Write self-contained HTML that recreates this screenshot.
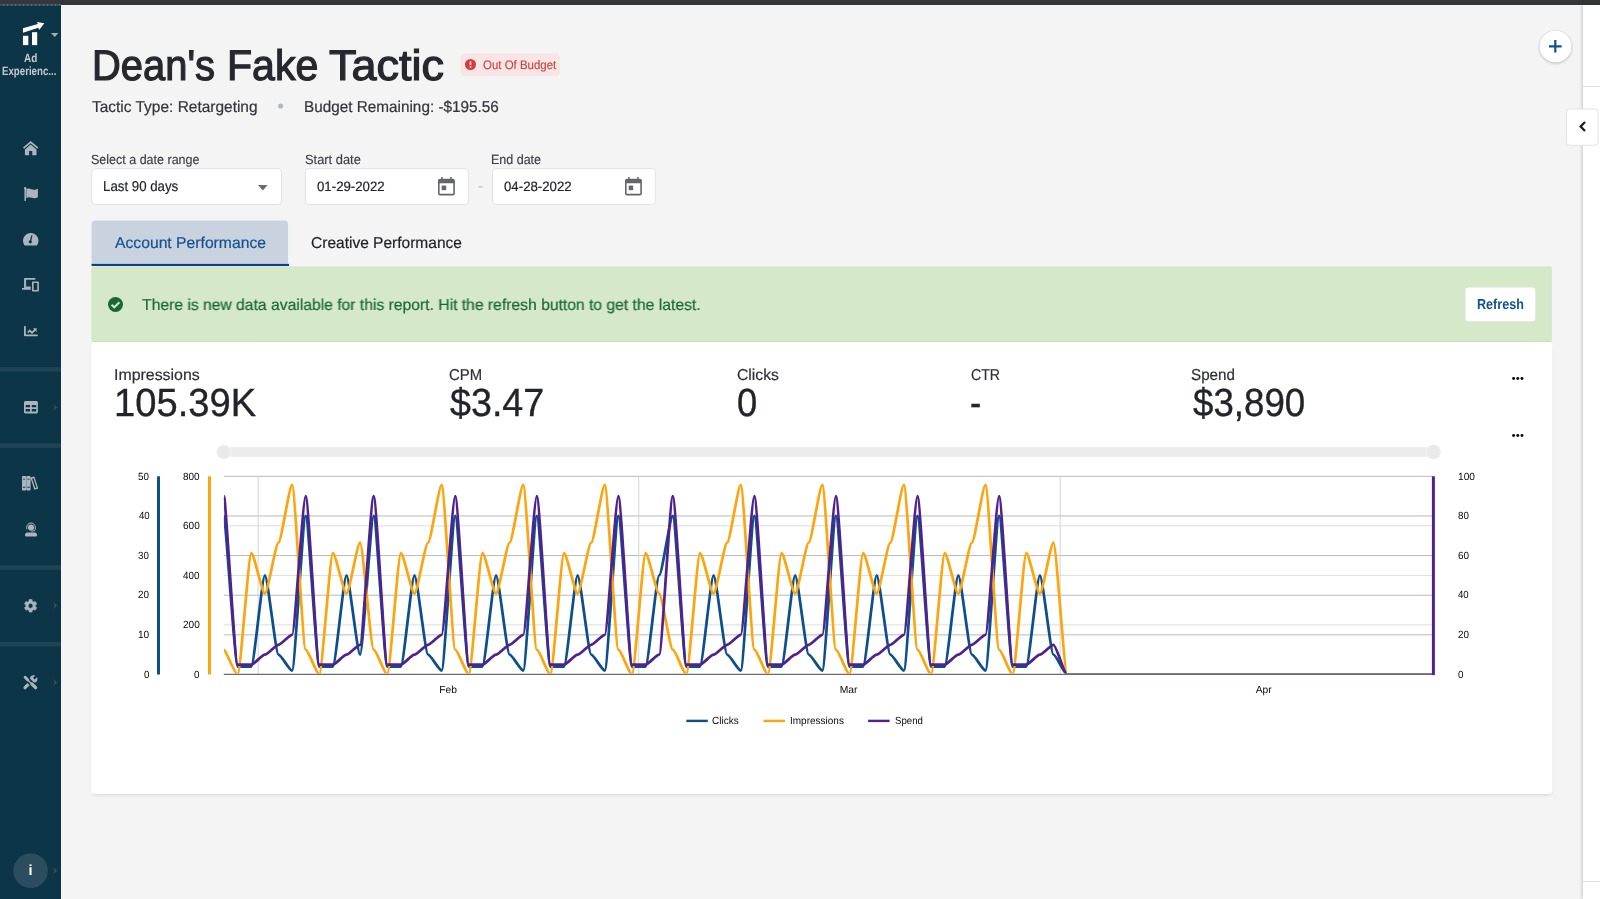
<!DOCTYPE html>
<html lang="en">
<head>
<meta charset="utf-8">
<title>Dean's Fake Tactic</title>
<style>
html,body{margin:0;padding:0;}
body{width:1600px;height:899px;overflow:hidden;position:relative;background:#f4f4f4;font-family:"Liberation Sans", Arial, sans-serif;}
.t{position:absolute;white-space:nowrap;transform-origin:0 0;display:block;text-rendering:geometricPrecision;}
.abs{position:absolute;}
#topbar{left:0;top:0;width:1600px;height:5px;background:#35363a;}
#sidebar{left:0;top:5px;width:61px;height:894px;background:#0c3547;}
.sdiv{position:absolute;left:0;width:61px;height:4px;background:#1f4555;}
#rightpanel{left:1583px;top:5px;width:17px;height:894px;background:#fff;box-shadow:-1px 0 3px rgba(0,0,0,0.18);}
.rline{position:absolute;left:0;width:17px;height:1px;background:#e3e3e6;}
.box{position:absolute;background:#fff;border:1px solid #e2e2e2;border-radius:4px;box-sizing:border-box;}
svg{position:absolute;overflow:visible;}
</style>
</head>
<body>
<div id="root" class="abs" style="left:0;top:0;width:1600px;height:899px;will-change:transform;">
<div id="topbar" class="abs"></div>
<nav aria-label="Main navigation">
<div id="sidebar" class="abs"></div>
<div class="abs" style="left:0px;top:4px;width:61px;height:1px;background:repeating-linear-gradient(90deg,#3f5b69 0,#3f5b69 2.700px,#6f7c86 2.700px,#6f7c86 4px);transform-origin:0 0;transform:translate(0.00px,0.20px) scale(1.0000,1.4000);"></div>
<div class="abs" style="left:0px;top:367px;width:61px;height:4px;background:#1f4555;transform-origin:0 0;transform:translate(0.00px,0.20px) scale(1.0000,1.1000);"></div>
<div class="abs" style="left:0px;top:443px;width:61px;height:4px;background:#1f4555;transform-origin:0 0;transform:translate(0.00px,0.50px) scale(1.0000,1.1000);"></div>
<div class="abs" style="left:0px;top:565px;width:61px;height:4px;background:#1f4555;transform-origin:0 0;transform:translate(0.00px,0.40px) scale(1.0000,1.1000);"></div>
<div class="abs" style="left:0px;top:642px;width:61px;height:4px;background:#1f4555;transform-origin:0 0;transform:translate(0.00px,0.00px) scale(1.0000,1.1000);"></div>
<svg style="left:0px;top:0px" width="61" height="60" viewBox="0 0 61 60" fill="#fff"><rect x="22.95" y="35.8" width="5.35" height="9.3"/><rect x="32.0" y="32.2" width="5.2" height="12.9"/><path d="M22.95 28.3 L37.9 23.9 L36.9 21.9 L44.3 23.3 L39.2 29.9 L38.4 27.8 L22.95 32.7 Z"/></svg>
<svg style="left:50.8px;top:32.7px" width="7.4" height="4" viewBox="0 0 7.4 4" fill="#9fb0ba"><path d="M0 0h7.4L3.7 4z"/></svg>
<span class="t" style="left:23.83px;top:51px;font-size:12px;line-height:14px;color:#c6cbd1;font-weight:700;transform:scaleX(0.8297);">Ad</span><span class="t" style="left:2.45px;top:64px;font-size:12px;line-height:14px;color:#c6cbd1;font-weight:700;transform:scaleX(0.8066);">Experienc...</span>
<svg style="left:23.00px;top:140.90px" width="15.4" height="14.2" viewBox="0 0 15.4 14.2" fill="#abb5bf"><path d="M7.7 0 L15.4 6.500 L14.3 7.800 L7.7 2.200 L1.100 7.800 L0 6.500 Z"/><path d="M7.7 3.500 L13.500 8.400 V13.600 Q13.500 14.200 12.900 14.200 H9.300 V10 H6.100 V14.200 H2.500 Q1.900 14.200 1.900 13.600 V8.400 Z"/></svg>
<svg style="left:24.10px;top:186.90px" width="14" height="13.9" viewBox="0 0 14 13.9" fill="#abb5bf"><circle cx="1.2" cy="1.2" r="1.2"/><rect x="0.45" y="1.2" width="1.500" height="12.7" rx="0.5"/><path d="M2.300 2.100 C4.200 1.100 5.800 1.600 7.400 2.300 C9.200 3 11 2.900 13.200 1.900 Q13.900 1.600 13.900 2.300 V9.900 Q13.900 10.300 13.500 10.500 C11.400 11.500 9.600 11.500 7.800 10.800 C6 10.100 4.400 9.900 2.300 10.900 Z"/></svg>
<svg style="left:23.00px;top:233.30px" width="15.5" height="12.4" viewBox="0 0 15.5 12.4" fill="#abb5bf"><path fill-rule="evenodd" d="M7.75 0 A7.75 7.75 0 0 1 15.500 7.75 C15.500 9.200 15.100 10.600 14.400 11.800 C14.200 12.200 13.900 12.400 13.500 12.400 H2 C1.600 12.400 1.300 12.200 1.100 11.800 C0.400 10.600 0 9.200 0 7.75 A7.75 7.75 0 0 1 7.75 0 Z M9.600 2.600 L8.300 7.500 A1.600 1.600 0 1 1 7 7.200 L8.300 2.300 Z"/></svg>
<svg style="left:22.30px;top:278.20px" width="16.9" height="13.6" viewBox="0 0 16.9 13.6" fill="#abb5bf"><path fill-rule="evenodd" d="M2.800 0 H13.300 V1.700 H4.100 V8.600 H8.700 V11.800 H0.800 C0.300 11.800 0 11.400 0 11 V10.100 H2.100 V0.700 C2.100 0.300 2.400 0 2.800 0 Z M10.800 3.400 H16.100 C16.600 3.400 16.900 3.800 16.900 4.200 V12.800 C16.900 13.300 16.600 13.600 16.100 13.600 H10.800 C10.300 13.600 10 13.300 10 12.800 V4.200 C10 3.800 10.300 3.400 10.800 3.400 Z M11.600 5.100 V11.900 H15.300 V5.100 Z"/></svg>
<svg style="left:23.70px;top:325.80px" width="13.8" height="10.2" viewBox="0 0 13.8 10.2" fill="#abb5bf"><path d="M0 0.600 Q0 0 0.600 0 H1.200 Q1.800 0 1.800 0.600 V8.400 H13.200 Q13.800 8.400 13.800 9 V9.600 Q13.800 10.200 13.200 10.200 H0.600 Q0 10.200 0 9.600 Z"/><path d="M3.200 5.900 L5.800 3.300 L8 5.500 L10.100 3.400 L9 2.300 H12.600 V5.900 L11.400 4.700 L8 8 L5.800 5.800 L4.400 7.200 Z"/></svg>
<svg style="left:23.70px;top:400.80px" width="13.9" height="12.4" viewBox="0 0 13.9 12.4" fill="#abb5bf"><path fill-rule="evenodd" d="M1.500 0 H12.400 C13.200 0 13.900 0.700 13.900 1.500 V10.900 C13.900 11.700 13.200 12.400 12.400 12.400 H1.500 C0.700 12.400 0 11.700 0 10.900 V1.500 C0 0.700 0.700 0 1.500 0 Z M1.700 3.900 V6.300 H6.100 V3.900 Z M7.800 3.900 V6.300 H12.200 V3.900 Z M1.700 8 V10.600 H6.100 V8 Z M7.800 8 V10.600 H12.200 V8 Z"/></svg>
<svg style="left:22.40px;top:476.40px" width="16.2" height="14.4" viewBox="0 0 16.2 14.4" fill="#abb5bf"><path fill-rule="evenodd" d="M0.900 0 H3.300 Q4.200 0 4.200 0.900 V13.500 Q4.200 14.400 3.300 14.400 H0.900 Q0 14.400 0 13.500 V0.900 Q0 0 0.900 0 Z M0.900 2.700 V3.600 H3.300 V2.700 Z M0.900 10.800 V11.700 H3.300 V10.800 Z M5.300 0 H7.700 Q8.600 0 8.600 0.900 V13.500 Q8.600 14.400 7.700 14.400 H5.300 Q4.400 14.400 4.400 13.500 V0.900 Q4.400 0 5.300 0 Z M5.300 2.700 V3.600 H7.700 V2.700 Z M5.300 10.800 V11.700 H7.700 V10.800 Z M9 1.400 L11.700 0.600 Q12.300 0.500 12.500 1 L16.100 12 Q16.300 12.600 15.700 12.800 L13 13.600 Q12.400 13.800 12.200 13.200 L8.600 2.200 Q8.400 1.600 9 1.400 Z M10.100 2.700 L13.300 12 L14.700 11.500 L11.500 2.300 Z"/></svg>
<svg style="left:24.70px;top:521.80px" width="12" height="14.4" viewBox="0 0 12 14.4" fill="#abb5bf"><circle cx="6" cy="5.500" r="3.100"/><path fill="none" stroke="#abb5bf" stroke-width="1" d="M1.700 7.200 V5.300 A4.300 4.300 0 0 1 10.300 5.300 V7 Q10.300 9.200 7.600 9.200 H6.200"/><path d="M2.300 10.400 H9.700 C11 10.400 12 11.400 12 12.700 V13.600 Q12 14.400 11.200 14.400 H0.800 Q0 14.400 0 13.600 V12.700 C0 11.400 1 10.400 2.300 10.400 Z"/></svg>
<svg style="left:23.90px;top:598.80px" width="13.2" height="13.6" viewBox="0 0 13.2 13.6" fill="#abb5bf"><path fill-rule="evenodd" stroke="#abb5bf" stroke-width="0.500" stroke-linejoin="round" d="M5.13 0.52 L8.07 0.52 L8.45 2.42 L9.46 3.01 L11.30 2.39 L12.77 4.93 L11.31 6.21 L11.31 7.39 L12.77 8.67 L11.30 11.21 L9.46 10.59 L8.45 11.18 L8.07 13.08 L5.13 13.08 L4.75 11.18 L3.74 10.59 L1.90 11.21 L0.43 8.67 L1.89 7.39 L1.89 6.21 L0.43 4.93 L1.90 2.39 L3.74 3.01 L4.75 2.42 Z M6.60 4.45 A2.35 2.35 0 1 0 6.61 4.45 Z"/></svg>
<svg style="left:23.40px;top:674.60px" width="14.7" height="14.7" viewBox="0 0 14.7 14.7" fill="#abb5bf"><g stroke-linecap="round" fill="none"><path d="M2 12.700 L9.300 5.400" stroke="#abb5bf" stroke-width="3.200"/><circle cx="10.700" cy="3.900" r="3.700" fill="#abb5bf" stroke="none"/><path d="M10.900 3.700 L14.900 -0.300" stroke="#0c3547" stroke-width="2.500" stroke-linecap="butt"/><path d="M2.300 2.500 L12.500 12.600" stroke="#0c3547" stroke-width="5"/><path d="M2.100 2.300 L4.800 5" stroke="#abb5bf" stroke-width="2.800"/><path d="M4.800 5 L8 8.200" stroke="#abb5bf" stroke-width="1.500"/><path d="M9 9.100 L12.600 12.700" stroke="#abb5bf" stroke-width="3.300"/></g></svg>
<svg style="left:52.8px;top:403.70px" width="4" height="7" viewBox="0 0 4 7" fill="#37535f"><path d="M0.300 0L4 3.500L0.300 7L1.600 3.500z"/></svg>
<svg style="left:52.8px;top:602.10px" width="4" height="7" viewBox="0 0 4 7" fill="#37535f"><path d="M0.300 0L4 3.500L0.300 7L1.600 3.500z"/></svg>
<svg style="left:52.8px;top:678.70px" width="4" height="7" viewBox="0 0 4 7" fill="#37535f"><path d="M0.300 0L4 3.500L0.300 7L1.600 3.500z"/></svg>
<svg style="left:52.8px;top:867.10px" width="4" height="7" viewBox="0 0 4 7" fill="#37535f"><path d="M0.300 0L4 3.500L0.300 7L1.600 3.500z"/></svg>
<div class="abs" style="left:13px;top:853px;width:35px;height:35px;border-radius:50%;background:#2b4d5d;transform-origin:0 0;transform:translate(0.30px,0.50px) scale(0.9886,0.9886);"></div>
<span class="t" style="left:28.55px;top:863px;font-size:14.5px;line-height:16px;color:#ffffff;font-weight:700;">i</span>
</nav>
<header>
<div id="rightpanel" class="abs"><div class="rline" style="top:81px"></div><div class="rline" style="top:876px"></div></div>
<div class="abs" style="left:1539px;top:30px;width:32px;height:32px;border-radius:50%;background:#fff;box-shadow:0 1px 3px rgba(0,0,0,0.22),0 0 1px rgba(0,0,0,0.2);transform-origin:0 0;transform:translate(0.50px,0.50px);"></div>
<svg style="left:1549.2px;top:40.2px" width="12.6" height="12.6" viewBox="0 0 12.6 12.6" fill="#10508e"><path d="M5.200 0h2.200v5.200h5.200v2.200H7.400v5.200H5.200V7.400H0V5.200h5.200z"/></svg>
<div class="abs" style="left:1566px;top:108px;width:33px;height:37px;border-radius:4px;background:#fff;border:1px solid #e4e4e6;box-sizing:border-box;transform-origin:0 0;transform:translate(0.00px,0.60px) scale(0.9879,1.0027);"></div>
<svg style="left:1578.5px;top:121px" width="7" height="11" viewBox="0 0 7 11" fill="none" stroke="#16161c" stroke-width="2.2"><path d="M6 1 L1.6 5.500 L6 10"/></svg>
<h1 style="margin:0;font-weight:normal;font-size:16px"><span class="t" style="left:91.98px;top:42px;font-size:42.8px;line-height:48px;color:#27272f;transform:scaleX(0.9323);-webkit-text-stroke:1.2px #27272f;">Dean's</span> <span class="t" style="left:227.49px;top:42px;font-size:42.8px;line-height:48px;color:#27272f;transform:scaleX(0.9603);-webkit-text-stroke:1.2px #27272f;">Fake</span> <span class="t" style="left:329.20px;top:42px;font-size:42.8px;line-height:48px;color:#27272f;transform:scaleX(1.0517);-webkit-text-stroke:1.2px #27272f;">Tactic</span></h1>
<div class="abs" style="left:460px;top:53px;width:99px;height:23px;border-radius:4px;background:#f9e5e6;transform-origin:0 0;transform:translate(0.70px,0.30px) scale(1.0020,0.9913);"></div>
<svg style="left:464.5px;top:59.2px" width="11" height="11" viewBox="0 0 11 11"><circle cx="5.5" cy="5.5" r="5.500" fill="#d8393c"/><rect x="4.7" y="2.3" width="1.6" height="4" rx="0.4" fill="#fae3e4"/><circle cx="5.5" cy="8" r="0.95" fill="#fae3e4"/></svg>
<span class="t" style="left:482.61px;top:58px;font-size:12.3px;line-height:14px;color:#c8453b;transform:scaleX(0.9326);-webkit-text-stroke:0.15px #c8453b;">Out Of Budget</span><span class="t" style="left:92.21px;top:99px;font-size:15.8px;line-height:17px;color:#33333b;transform:scaleX(0.9786);-webkit-text-stroke:0.2px #33333b;">Tactic Type: Retargeting</span><div class="abs" style="left:278px;top:103px;width:5px;height:5px;border-radius:50%;background:#b3b7c3;transform-origin:0 0;transform:translate(0.10px,0.40px);"></div>
<span class="t" style="left:303.54px;top:99px;font-size:15.8px;line-height:17px;color:#33333b;transform:scaleX(0.9686);-webkit-text-stroke:0.2px #33333b;">Budget Remaining: -$195.56</span><span class="t" style="left:91.31px;top:152px;font-size:13.3px;line-height:15px;color:#3a3b44;transform:scaleX(0.9405);-webkit-text-stroke:0.15px #3a3b44;">Select a date range</span><span class="t" style="left:304.89px;top:152px;font-size:13.3px;line-height:15px;color:#3a3b44;transform:scaleX(0.9678);-webkit-text-stroke:0.15px #3a3b44;">Start date</span><span class="t" style="left:491.23px;top:152px;font-size:13.3px;line-height:15px;color:#3a3b44;transform:scaleX(0.9401);-webkit-text-stroke:0.15px #3a3b44;">End date</span><div class="box" style="left:91px;top:168px;width:191px;height:37px;transform-origin:0 0;transform:translate(0.25px,0.10px) scale(0.9987,0.9973);"></div>
<div class="box" style="left:305px;top:168px;width:164px;height:37px;transform-origin:0 0;transform:translate(0.00px,0.10px) scale(0.9994,0.9973);"></div>
<div class="box" style="left:492px;top:168px;width:164px;height:37px;transform-origin:0 0;transform:translate(0.00px,0.10px) scale(0.9988,0.9973);"></div>
<span class="t" style="left:103.48px;top:179px;font-size:14.3px;line-height:16px;color:#1f2027;transform:scaleX(0.9279);-webkit-text-stroke:0.2px #1f2027;">Last 90 days</span><span class="t" style="left:317.41px;top:179px;font-size:13.6px;line-height:15px;color:#1f2027;transform:scaleX(0.9736);-webkit-text-stroke:0.2px #1f2027;">01-29-2022</span><span class="t" style="left:504.11px;top:179px;font-size:13.6px;line-height:15px;color:#1f2027;transform:scaleX(0.9736);-webkit-text-stroke:0.2px #1f2027;">04-28-2022</span><svg style="left:257.6px;top:184.8px" width="9.6" height="5.4" viewBox="0 0 9.6 5.4" fill="#6a6a70"><path d="M0 0h9.6L4.8 5.4z"/></svg>
<svg style="left:437.8px;top:176.6px" width="16.9" height="18.4" viewBox="0 0 16.9 18.4" fill="#64656b"><path fill-rule="evenodd" d="M3.200 0 H4.700 V1.700 H12.200 V0 H13.700 V1.700 H14.900 C16 1.700 16.900 2.600 16.900 3.700 V16.400 C16.900 17.500 16 18.400 14.900 18.400 H2 C0.900 18.400 0 17.500 0 16.400 V3.700 C0 2.600 0.900 1.700 2 1.700 H3.200 Z M1.600 6.300 V16.800 H15.300 V6.300 Z"/><rect x="3.700" y="8.600" width="4.500" height="4.600"/></svg>
<svg style="left:624.7px;top:176.6px" width="16.9" height="18.4" viewBox="0 0 16.9 18.4" fill="#64656b"><path fill-rule="evenodd" d="M3.200 0 H4.700 V1.700 H12.200 V0 H13.700 V1.700 H14.900 C16 1.700 16.900 2.600 16.900 3.700 V16.400 C16.900 17.500 16 18.400 14.900 18.400 H2 C0.900 18.400 0 17.500 0 16.400 V3.700 C0 2.600 0.900 1.700 2 1.700 H3.200 Z M1.600 6.300 V16.800 H15.300 V6.300 Z"/><rect x="3.700" y="8.600" width="4.500" height="4.600"/></svg>
<div class="abs" style="left:478px;top:186px;width:4px;height:1px;background:#b9bbc6;transform-origin:0 0;transform:translate(0.40px,0.30px) scale(1.0500,1.2000);"></div>
<div class="abs" style="left:91px;top:220px;width:197px;height:44px;background:#c9d3e0;border-radius:4px 4px 0 0;transform-origin:0 0;transform:translate(0.50px,0.40px) scale(0.9980,1.0023);"></div>
<div class="abs" style="left:91px;top:263px;width:198px;height:2px;background:#0d3f89;transform-origin:0 0;transform:translate(0.50px,0.90px) scale(0.9975,1.0500);"></div>
<span class="t" style="left:115.20px;top:235px;font-size:15.8px;line-height:17px;color:#15508f;transform:scaleX(0.9938);-webkit-text-stroke:0.2px #15508f;">Account Performance</span><span class="t" style="left:311.41px;top:235px;font-size:15.8px;line-height:17px;color:#1f2027;transform:scaleX(0.9824);-webkit-text-stroke:0.2px #1f2027;">Creative Performance</span></header>
<main>
<div class="abs" style="left:91px;top:342px;width:1461px;height:452px;background:#fff;border-radius:4px;box-shadow:0 2px 3px -1px rgba(0,0,0,0.085),0 4px 5px -3px rgba(0,0,0,0.06);transform-origin:0 0;transform:translate(0.40px,0.00px);"></div>
<div class="abs" style="left:91px;top:266px;width:1460px;height:75px;background:#d5e9c8;border-radius:2px;border-bottom:1px solid #c9e0ba;box-sizing:border-box;box-shadow:0 -0.500px 0 rgba(0,0,0,0.05);transform-origin:0 0;transform:translate(0.50px,0.60px) scale(1.0003,1.0053);"></div>
<svg style="left:108px;top:297.2px" width="15" height="15" viewBox="0 0 15 15"><circle cx="7.5" cy="7.5" r="7.5" fill="#196834"/><path d="M3.6 7.700 L6.300 10.300 L11.400 5.200" fill="none" stroke="#d5e9c8" stroke-width="2"/></svg>
<span class="t" style="left:142.30px;top:297px;font-size:15.8px;line-height:17px;color:#196834;transform:scaleX(0.9924);-webkit-text-stroke:0.2px #196834;">There is new data available for this report. Hit the refresh button to get the latest.</span><div class="abs" style="left:1465px;top:287px;width:70px;height:34px;background:#fff;border-radius:3px;transform-origin:0 0;transform:translate(0.50px,0.50px) scale(0.9971,0.9912);"></div>
<span class="t" style="left:1477.11px;top:297px;font-size:14.4px;line-height:16px;color:#14508f;font-weight:700;transform:scaleX(0.8744);">Refresh</span><span class="t" style="left:113.79px;top:367px;font-size:15.8px;line-height:17px;color:#2e2f38;transform:scaleX(1.0063);-webkit-text-stroke:0.2px #2e2f38;">Impressions</span><span class="t" style="left:114.39px;top:381px;font-size:39.3px;line-height:44px;color:#22232b;transform:scaleX(0.9708);-webkit-text-stroke:0.35px #22232b;">105.39K</span><span class="t" style="left:448.65px;top:367px;font-size:15.8px;line-height:17px;color:#2e2f38;transform:scaleX(0.9410);-webkit-text-stroke:0.2px #2e2f38;">CPM</span><span class="t" style="left:450.48px;top:381px;font-size:39.3px;line-height:44px;color:#22232b;transform:scaleX(0.9586);-webkit-text-stroke:0.35px #22232b;">$3.47</span><span class="t" style="left:736.70px;top:367px;font-size:15.8px;line-height:17px;color:#2e2f38;transform:scaleX(0.9968);-webkit-text-stroke:0.2px #2e2f38;">Clicks</span><span class="t" style="left:737.44px;top:381px;font-size:39.3px;line-height:44px;color:#22232b;transform:scaleX(0.9237);-webkit-text-stroke:0.35px #22232b;">0</span><span class="t" style="left:970.68px;top:367px;font-size:15.8px;line-height:17px;color:#2e2f38;transform:scaleX(0.8947);-webkit-text-stroke:0.2px #2e2f38;">CTR</span><span class="t" style="left:970.42px;top:381px;font-size:39.3px;line-height:44px;color:#22232b;transform:scaleX(0.8574);-webkit-text-stroke:0.35px #22232b;">-</span><span class="t" style="left:1191.23px;top:367px;font-size:15.8px;line-height:17px;color:#2e2f38;transform:scaleX(0.9614);-webkit-text-stroke:0.2px #2e2f38;">Spend</span><span class="t" style="left:1193.47px;top:381px;font-size:39.3px;line-height:44px;color:#22232b;transform:scaleX(0.9340);-webkit-text-stroke:0.35px #22232b;">$3,890</span><svg style="left:1512.1px;top:376.9px" width="11.6" height="3.2" viewBox="0 0 11.6 3.2" fill="#0c0c0c"><circle cx="1.600" cy="1.600" r="1.500"/><circle cx="5.800" cy="1.600" r="1.500"/><circle cx="10" cy="1.600" r="1.500"/></svg>
<svg style="left:1512.1px;top:433.9px" width="11.6" height="3.2" viewBox="0 0 11.6 3.2" fill="#0c0c0c"><circle cx="1.600" cy="1.600" r="1.500"/><circle cx="5.800" cy="1.600" r="1.500"/><circle cx="10" cy="1.600" r="1.500"/></svg>
<svg style="left:0;top:0" width="1600" height="899" viewBox="0 0 1600 899">
<defs><clipPath id="plotclip"><rect x="223.8" y="456.3" width="1209.8" height="217.3"/></clipPath></defs>
<rect x="223.8" y="447.2" width="1209.8" height="9.600" fill="#ececec"/>
<circle cx="223.8" cy="452" r="7.3" fill="#e9e9e9" stroke="#f8f8f8" stroke-width="0.8"/><circle cx="1433.6" cy="452" r="7.3" fill="#e9e9e9" stroke="#f8f8f8" stroke-width="0.8"/>
<line x1="223.8" x2="1433.6" y1="634.86" y2="634.86" stroke="#b9b9b9" stroke-width="1"/>
<line x1="223.8" x2="1433.6" y1="595.22" y2="595.22" stroke="#b9b9b9" stroke-width="1"/>
<line x1="223.8" x2="1433.6" y1="555.58" y2="555.58" stroke="#b9b9b9" stroke-width="1"/>
<line x1="223.8" x2="1433.6" y1="515.94" y2="515.94" stroke="#b9b9b9" stroke-width="1"/>
<line x1="223.8" x2="1433.6" y1="476.30" y2="476.30" stroke="#b9b9b9" stroke-width="1"/>
<line x1="223.8" x2="1433.6" y1="624.95" y2="624.95" stroke="#dcdcdc" stroke-width="1"/>
<line x1="223.8" x2="1433.6" y1="575.40" y2="575.40" stroke="#dcdcdc" stroke-width="1"/>
<line x1="223.8" x2="1433.6" y1="525.85" y2="525.85" stroke="#dcdcdc" stroke-width="1"/>
<line x1="258.13" x2="258.13" y1="476.3" y2="674.5" stroke="#d4d4d4" stroke-width="1"/>
<line x1="638.74" x2="638.74" y1="476.3" y2="674.5" stroke="#d4d4d4" stroke-width="1"/>
<line x1="1060.14" x2="1060.14" y1="476.3" y2="674.5" stroke="#d4d4d4" stroke-width="1"/>
<line x1="158.5" x2="158.5" y1="476.3" y2="674.5" stroke="#0d4f8b" stroke-width="3"/>
<line x1="209.5" x2="209.5" y1="476.3" y2="674.5" stroke="#fda50f" stroke-width="3"/>
<g clip-path="url(#plotclip)">
<path d="M224.10 515.94 C225.46 515.94 234.98 666.57 237.70 666.57 C240.42 666.57 248.57 666.57 251.29 666.57 C254.01 666.57 262.17 575.40 264.89 575.40 C267.61 575.40 275.77 654.68 278.49 654.68 C281.20 654.68 289.36 670.54 292.08 670.54 C294.80 670.53 302.96 515.94 305.68 515.94 C308.40 515.94 316.55 666.57 319.27 666.57 C321.99 666.57 330.15 666.57 332.87 666.57 C335.59 666.57 343.75 575.40 346.47 575.40 C349.19 575.40 357.34 654.68 360.06 654.68 C362.78 654.68 370.94 515.94 373.66 515.94 C376.38 515.94 384.54 666.57 387.26 666.57 C389.97 666.57 398.13 666.57 400.85 666.57 C403.57 666.57 411.73 575.40 414.45 575.40 C417.17 575.40 425.32 654.68 428.04 654.68 C430.76 654.68 438.92 670.54 441.64 670.54 C444.36 670.53 452.52 515.94 455.24 515.94 C457.96 515.94 466.11 666.57 468.83 666.57 C471.55 666.57 479.71 666.57 482.43 666.57 C485.15 666.57 493.31 575.40 496.03 575.40 C498.74 575.40 506.90 654.68 509.62 654.68 C512.34 654.68 520.50 670.54 523.22 670.54 C525.94 670.53 534.09 515.94 536.81 515.94 C539.53 515.94 547.69 666.57 550.41 666.57 C553.13 666.57 561.29 666.57 564.01 666.57 C566.73 666.57 574.88 575.40 577.60 575.40 C580.32 575.40 588.48 654.68 591.20 654.68 C593.92 654.68 602.08 670.54 604.80 670.54 C607.51 670.53 615.67 515.94 618.39 515.94 C621.11 515.94 629.27 666.57 631.99 666.57 C634.71 666.57 642.86 666.57 645.58 666.57 C648.30 666.57 656.46 575.40 659.18 575.40 C661.90 575.40 670.06 515.94 672.78 515.94 C675.50 515.94 683.65 666.57 686.37 666.57 C689.09 666.57 697.25 666.57 699.97 666.57 C702.69 666.57 710.85 575.40 713.57 575.40 C716.28 575.40 724.44 654.68 727.16 654.68 C729.88 654.68 738.04 670.54 740.76 670.54 C743.48 670.53 751.63 515.94 754.35 515.94 C757.07 515.94 765.23 666.57 767.95 666.57 C770.67 666.57 778.83 666.57 781.55 666.57 C784.27 666.57 792.42 575.40 795.14 575.40 C797.86 575.40 806.02 654.68 808.74 654.68 C811.46 654.68 819.62 670.54 822.34 670.54 C825.05 670.53 833.21 515.94 835.93 515.94 C838.65 515.94 846.81 666.57 849.53 666.57 C852.25 666.57 860.40 666.57 863.12 666.57 C865.84 666.57 874.00 575.40 876.72 575.40 C879.44 575.40 887.60 654.68 890.32 654.68 C893.04 654.68 901.19 670.54 903.91 670.54 C906.63 670.53 914.79 515.94 917.51 515.94 C920.23 515.94 928.39 666.57 931.11 666.57 C933.82 666.57 941.98 666.57 944.70 666.57 C947.42 666.57 955.58 575.40 958.30 575.40 C961.02 575.40 969.17 654.68 971.89 654.68 C974.61 654.68 982.77 670.54 985.49 670.54 C988.21 670.53 996.37 515.94 999.09 515.94 C1001.81 515.94 1009.96 666.57 1012.68 666.57 C1015.40 666.57 1023.56 666.57 1026.28 666.57 C1029.00 666.57 1037.16 575.40 1039.88 575.40 C1042.60 575.40 1050.75 654.68 1053.47 654.68 C1056.19 654.68 1064.35 674.50 1067.07 674.50 C1069.79 674.50 1077.94 674.50 1080.66 674.50 C1083.38 674.50 1091.54 674.50 1094.26 674.50 C1096.98 674.50 1105.14 674.50 1107.86 674.50 C1110.58 674.50 1118.73 674.50 1121.45 674.50 C1124.17 674.50 1132.33 674.50 1135.05 674.50 C1137.77 674.50 1145.93 674.50 1148.65 674.50 C1151.37 674.50 1159.52 674.50 1162.24 674.50 C1164.96 674.50 1173.12 674.50 1175.84 674.50 C1178.56 674.50 1186.71 674.50 1189.43 674.50 C1192.15 674.50 1200.31 674.50 1203.03 674.50 C1205.75 674.50 1213.91 674.50 1216.63 674.50 C1219.35 674.50 1227.50 674.50 1230.22 674.50 C1232.94 674.50 1241.10 674.50 1243.82 674.50 C1246.54 674.50 1254.70 674.50 1257.42 674.50 C1260.14 674.50 1268.29 674.50 1271.01 674.50 C1273.73 674.50 1281.89 674.50 1284.61 674.50 C1287.33 674.50 1295.48 674.50 1298.20 674.50 C1300.92 674.50 1309.08 674.50 1311.80 674.50 C1314.52 674.50 1322.68 674.50 1325.40 674.50 C1328.12 674.50 1336.27 674.50 1338.99 674.50 C1341.71 674.50 1349.87 674.50 1352.59 674.50 C1355.31 674.50 1363.47 674.50 1366.19 674.50 C1368.91 674.50 1377.06 674.50 1379.78 674.50 C1382.50 674.50 1390.66 674.50 1393.38 674.50 C1396.10 674.50 1404.25 674.50 1406.97 674.50 C1409.69 674.50 1417.85 674.50 1420.57 674.50 C1423.29 674.50 1432.81 674.50 1434.17 674.50" fill="none" stroke="#0d4f8b" stroke-width="2.75" stroke-linejoin="round"/>
<path d="M224.10 649.73 C225.46 649.73 234.98 674.50 237.70 674.50 C240.42 674.50 248.57 553.10 251.29 553.10 C254.01 553.10 262.17 593.73 264.89 593.73 C267.61 593.73 275.77 542.70 278.49 542.70 C281.20 542.70 289.36 484.97 292.08 484.97 C294.80 484.97 302.96 649.72 305.68 649.73 C308.40 649.73 316.55 674.50 319.27 674.50 C321.99 674.50 330.15 553.10 332.87 553.10 C335.59 553.10 343.75 593.73 346.47 593.73 C349.19 593.73 357.34 542.70 360.06 542.70 C362.78 542.70 370.94 649.72 373.66 649.73 C376.38 649.73 384.54 674.50 387.26 674.50 C389.97 674.50 398.13 553.10 400.85 553.10 C403.57 553.10 411.73 593.73 414.45 593.73 C417.17 593.73 425.32 542.70 428.04 542.70 C430.76 542.70 438.92 484.97 441.64 484.97 C444.36 484.97 452.52 649.72 455.24 649.73 C457.96 649.73 466.11 674.50 468.83 674.50 C471.55 674.50 479.71 553.10 482.43 553.10 C485.15 553.10 493.31 593.73 496.03 593.73 C498.74 593.73 506.90 542.70 509.62 542.70 C512.34 542.70 520.50 484.97 523.22 484.97 C525.94 484.97 534.09 649.72 536.81 649.73 C539.53 649.73 547.69 674.50 550.41 674.50 C553.13 674.50 561.29 553.10 564.01 553.10 C566.73 553.10 574.88 593.73 577.60 593.73 C580.32 593.73 588.48 542.70 591.20 542.70 C593.92 542.70 602.08 484.97 604.80 484.97 C607.51 484.97 615.67 649.72 618.39 649.73 C621.11 649.73 629.27 674.50 631.99 674.50 C634.71 674.50 642.86 553.10 645.58 553.10 C648.30 553.10 656.46 593.73 659.18 593.73 C661.90 593.73 670.06 649.72 672.78 649.73 C675.50 649.73 683.65 674.50 686.37 674.50 C689.09 674.50 697.25 553.10 699.97 553.10 C702.69 553.10 710.85 593.73 713.57 593.73 C716.28 593.73 724.44 542.70 727.16 542.70 C729.88 542.70 738.04 484.97 740.76 484.97 C743.48 484.97 751.63 649.72 754.35 649.73 C757.07 649.73 765.23 674.50 767.95 674.50 C770.67 674.50 778.83 553.10 781.55 553.10 C784.27 553.10 792.42 593.73 795.14 593.73 C797.86 593.73 806.02 542.70 808.74 542.70 C811.46 542.70 819.62 484.97 822.34 484.97 C825.05 484.97 833.21 649.72 835.93 649.73 C838.65 649.73 846.81 674.50 849.53 674.50 C852.25 674.50 860.40 553.10 863.12 553.10 C865.84 553.10 874.00 593.73 876.72 593.73 C879.44 593.73 887.60 542.70 890.32 542.70 C893.04 542.70 901.19 484.97 903.91 484.97 C906.63 484.97 914.79 649.72 917.51 649.73 C920.23 649.73 928.39 674.50 931.11 674.50 C933.82 674.50 941.98 553.10 944.70 553.10 C947.42 553.10 955.58 593.73 958.30 593.73 C961.02 593.73 969.17 542.70 971.89 542.70 C974.61 542.70 982.77 484.97 985.49 484.97 C988.21 484.97 996.37 649.72 999.09 649.73 C1001.81 649.73 1009.96 674.50 1012.68 674.50 C1015.40 674.50 1023.56 553.10 1026.28 553.10 C1029.00 553.10 1037.16 593.73 1039.88 593.73 C1042.60 593.73 1050.75 542.70 1053.47 542.70 C1056.19 542.70 1064.35 674.50 1067.07 674.50 C1069.79 674.50 1077.94 674.50 1080.66 674.50 C1083.38 674.50 1091.54 674.50 1094.26 674.50 C1096.98 674.50 1105.14 674.50 1107.86 674.50 C1110.58 674.50 1118.73 674.50 1121.45 674.50 C1124.17 674.50 1132.33 674.50 1135.05 674.50 C1137.77 674.50 1145.93 674.50 1148.65 674.50 C1151.37 674.50 1159.52 674.50 1162.24 674.50 C1164.96 674.50 1173.12 674.50 1175.84 674.50 C1178.56 674.50 1186.71 674.50 1189.43 674.50 C1192.15 674.50 1200.31 674.50 1203.03 674.50 C1205.75 674.50 1213.91 674.50 1216.63 674.50 C1219.35 674.50 1227.50 674.50 1230.22 674.50 C1232.94 674.50 1241.10 674.50 1243.82 674.50 C1246.54 674.50 1254.70 674.50 1257.42 674.50 C1260.14 674.50 1268.29 674.50 1271.01 674.50 C1273.73 674.50 1281.89 674.50 1284.61 674.50 C1287.33 674.50 1295.48 674.50 1298.20 674.50 C1300.92 674.50 1309.08 674.50 1311.80 674.50 C1314.52 674.50 1322.68 674.50 1325.40 674.50 C1328.12 674.50 1336.27 674.50 1338.99 674.50 C1341.71 674.50 1349.87 674.50 1352.59 674.50 C1355.31 674.50 1363.47 674.50 1366.19 674.50 C1368.91 674.50 1377.06 674.50 1379.78 674.50 C1382.50 674.50 1390.66 674.50 1393.38 674.50 C1396.10 674.50 1404.25 674.50 1406.97 674.50 C1409.69 674.50 1417.85 674.50 1420.57 674.50 C1423.29 674.50 1432.81 674.50 1434.17 674.50" fill="none" stroke="#fda50f" stroke-width="2.75" stroke-linejoin="round"/>
<path d="M224.10 496.12 C225.46 496.12 234.98 664.59 237.70 664.59 C240.42 664.59 248.57 664.59 251.29 664.59 C254.01 664.59 262.17 654.68 264.89 654.68 C267.61 654.68 275.77 644.77 278.49 644.77 C281.20 644.77 289.36 634.86 292.08 634.86 C294.80 634.86 302.96 496.12 305.68 496.12 C308.40 496.12 316.55 664.59 319.27 664.59 C321.99 664.59 330.15 664.59 332.87 664.59 C335.59 664.59 343.75 654.68 346.47 654.68 C349.19 654.68 357.34 644.77 360.06 644.77 C362.78 644.77 370.94 496.12 373.66 496.12 C376.38 496.12 384.54 664.59 387.26 664.59 C389.97 664.59 398.13 664.59 400.85 664.59 C403.57 664.59 411.73 654.68 414.45 654.68 C417.17 654.68 425.32 644.77 428.04 644.77 C430.76 644.77 438.92 634.86 441.64 634.86 C444.36 634.86 452.52 496.12 455.24 496.12 C457.96 496.12 466.11 664.59 468.83 664.59 C471.55 664.59 479.71 664.59 482.43 664.59 C485.15 664.59 493.31 654.68 496.03 654.68 C498.74 654.68 506.90 644.77 509.62 644.77 C512.34 644.77 520.50 634.86 523.22 634.86 C525.94 634.86 534.09 496.12 536.81 496.12 C539.53 496.12 547.69 664.59 550.41 664.59 C553.13 664.59 561.29 664.59 564.01 664.59 C566.73 664.59 574.88 654.68 577.60 654.68 C580.32 654.68 588.48 644.77 591.20 644.77 C593.92 644.77 602.08 634.86 604.80 634.86 C607.51 634.86 615.67 496.12 618.39 496.12 C621.11 496.12 629.27 664.59 631.99 664.59 C634.71 664.59 642.86 664.59 645.58 664.59 C648.30 664.59 656.46 654.68 659.18 654.68 C661.90 654.68 670.06 496.12 672.78 496.12 C675.50 496.12 683.65 664.59 686.37 664.59 C689.09 664.59 697.25 664.59 699.97 664.59 C702.69 664.59 710.85 654.68 713.57 654.68 C716.28 654.68 724.44 644.77 727.16 644.77 C729.88 644.77 738.04 634.86 740.76 634.86 C743.48 634.86 751.63 496.12 754.35 496.12 C757.07 496.12 765.23 664.59 767.95 664.59 C770.67 664.59 778.83 664.59 781.55 664.59 C784.27 664.59 792.42 654.68 795.14 654.68 C797.86 654.68 806.02 644.77 808.74 644.77 C811.46 644.77 819.62 634.86 822.34 634.86 C825.05 634.86 833.21 496.12 835.93 496.12 C838.65 496.12 846.81 664.59 849.53 664.59 C852.25 664.59 860.40 664.59 863.12 664.59 C865.84 664.59 874.00 654.68 876.72 654.68 C879.44 654.68 887.60 644.77 890.32 644.77 C893.04 644.77 901.19 634.86 903.91 634.86 C906.63 634.86 914.79 496.12 917.51 496.12 C920.23 496.12 928.39 664.59 931.11 664.59 C933.82 664.59 941.98 664.59 944.70 664.59 C947.42 664.59 955.58 654.68 958.30 654.68 C961.02 654.68 969.17 644.77 971.89 644.77 C974.61 644.77 982.77 634.86 985.49 634.86 C988.21 634.86 996.37 496.12 999.09 496.12 C1001.81 496.12 1009.96 664.59 1012.68 664.59 C1015.40 664.59 1023.56 664.59 1026.28 664.59 C1029.00 664.59 1037.16 654.68 1039.88 654.68 C1042.60 654.68 1050.75 644.77 1053.47 644.77 C1056.19 644.77 1064.35 674.50 1067.07 674.50 C1069.79 674.50 1077.94 674.50 1080.66 674.50 C1083.38 674.50 1091.54 674.50 1094.26 674.50 C1096.98 674.50 1105.14 674.50 1107.86 674.50 C1110.58 674.50 1118.73 674.50 1121.45 674.50 C1124.17 674.50 1132.33 674.50 1135.05 674.50 C1137.77 674.50 1145.93 674.50 1148.65 674.50 C1151.37 674.50 1159.52 674.50 1162.24 674.50 C1164.96 674.50 1173.12 674.50 1175.84 674.50 C1178.56 674.50 1186.71 674.50 1189.43 674.50 C1192.15 674.50 1200.31 674.50 1203.03 674.50 C1205.75 674.50 1213.91 674.50 1216.63 674.50 C1219.35 674.50 1227.50 674.50 1230.22 674.50 C1232.94 674.50 1241.10 674.50 1243.82 674.50 C1246.54 674.50 1254.70 674.50 1257.42 674.50 C1260.14 674.50 1268.29 674.50 1271.01 674.50 C1273.73 674.50 1281.89 674.50 1284.61 674.50 C1287.33 674.50 1295.48 674.50 1298.20 674.50 C1300.92 674.50 1309.08 674.50 1311.80 674.50 C1314.52 674.50 1322.68 674.50 1325.40 674.50 C1328.12 674.50 1336.27 674.50 1338.99 674.50 C1341.71 674.50 1349.87 674.50 1352.59 674.50 C1355.31 674.50 1363.47 674.50 1366.19 674.50 C1368.91 674.50 1377.06 674.50 1379.78 674.50 C1382.50 674.50 1390.66 674.50 1393.38 674.50 C1396.10 674.50 1404.25 674.50 1406.97 674.50 C1409.69 674.50 1417.85 674.50 1420.57 674.50 C1423.29 674.50 1432.81 674.50 1434.17 674.50" fill="none" stroke="#50228f" stroke-width="2.75" stroke-linejoin="round"/>
</g>
<line x1="223.8" x2="1433.6" y1="674.40" y2="674.40" stroke="#6c6c6c" stroke-width="1.1"/>
<line x1="1433.4" x2="1433.4" y1="476.3" y2="675.1" stroke="#50228f" stroke-width="3"/>
</svg>
<span class="t" style="left:143.82px;top:670px;font-size:10.4px;line-height:11px;color:#0a0a0a;transform:scaleX(0.9400);">0</span><span class="t" style="left:138.02px;top:630px;font-size:10.4px;line-height:11px;color:#0a0a0a;transform:scaleX(0.9729);">10</span><span class="t" style="left:138.22px;top:590px;font-size:10.4px;line-height:11px;color:#0a0a0a;transform:scaleX(0.9547);">20</span><span class="t" style="left:138.42px;top:551px;font-size:10.4px;line-height:11px;color:#0a0a0a;transform:scaleX(0.9372);">30</span><span class="t" style="left:138.51px;top:511px;font-size:10.4px;line-height:11px;color:#0a0a0a;transform:scaleX(0.9286);">40</span><span class="t" style="left:138.32px;top:472px;font-size:10.4px;line-height:11px;color:#0a0a0a;transform:scaleX(0.9458);">50</span><span class="t" style="left:194.22px;top:670px;font-size:10.4px;line-height:11px;color:#0a0a0a;transform:scaleX(0.9400);">0</span><span class="t" style="left:182.92px;top:620px;font-size:10.4px;line-height:11px;color:#0a0a0a;transform:scaleX(0.9655);">200</span><span class="t" style="left:183.21px;top:571px;font-size:10.4px;line-height:11px;color:#0a0a0a;transform:scaleX(0.9482);">400</span><span class="t" style="left:182.92px;top:521px;font-size:10.4px;line-height:11px;color:#0a0a0a;transform:scaleX(0.9655);">600</span><span class="t" style="left:183.02px;top:472px;font-size:10.4px;line-height:11px;color:#0a0a0a;transform:scaleX(0.9597);">800</span><span class="t" style="left:1457.92px;top:670px;font-size:10.4px;line-height:11px;color:#0a0a0a;transform:scaleX(0.9400);">0</span><span class="t" style="left:1457.82px;top:630px;font-size:10.4px;line-height:11px;color:#0a0a0a;transform:scaleX(0.9547);">20</span><span class="t" style="left:1458.11px;top:590px;font-size:10.4px;line-height:11px;color:#0a0a0a;transform:scaleX(0.9286);">40</span><span class="t" style="left:1457.82px;top:551px;font-size:10.4px;line-height:11px;color:#0a0a0a;transform:scaleX(0.9547);">60</span><span class="t" style="left:1457.92px;top:511px;font-size:10.4px;line-height:11px;color:#0a0a0a;transform:scaleX(0.9458);">80</span><span class="t" style="left:1457.62px;top:472px;font-size:10.4px;line-height:11px;color:#0a0a0a;transform:scaleX(0.9774);">100</span><span class="t" style="left:439.14px;top:685px;font-size:10.3px;line-height:11px;color:#0a0a0a;">Feb</span><span class="t" style="left:839.80px;top:685px;font-size:10.3px;line-height:11px;color:#0a0a0a;">Mar</span><span class="t" style="left:1255.75px;top:685px;font-size:10.3px;line-height:11px;color:#0a0a0a;">Apr</span><div class="abs" style="left:686px;top:719px;width:22px;height:2px;background:#0d4f8b;transform-origin:0 0;transform:translate(0.30px,0.70px) scale(0.9773,1.2000);"></div>
<span class="t" style="left:712.42px;top:716px;font-size:10.3px;line-height:11px;color:#0a0a0a;transform:scaleX(0.9694);">Clicks</span><div class="abs" style="left:763px;top:719px;width:22px;height:2px;background:#fda50f;transform-origin:0 0;transform:translate(0.50px,0.70px) scale(0.9773,1.2000);"></div>
<span class="t" style="left:789.83px;top:716px;font-size:10.3px;line-height:11px;color:#0a0a0a;transform:scaleX(0.9710);">Impressions</span><div class="abs" style="left:868px;top:719px;width:22px;height:2px;background:#50228f;transform-origin:0 0;transform:translate(0.10px,0.70px) scale(0.9773,1.2000);"></div>
<span class="t" style="left:894.73px;top:716px;font-size:10.3px;line-height:11px;color:#0a0a0a;transform:scaleX(0.9355);">Spend</span></main>
</div>
</body></html>
